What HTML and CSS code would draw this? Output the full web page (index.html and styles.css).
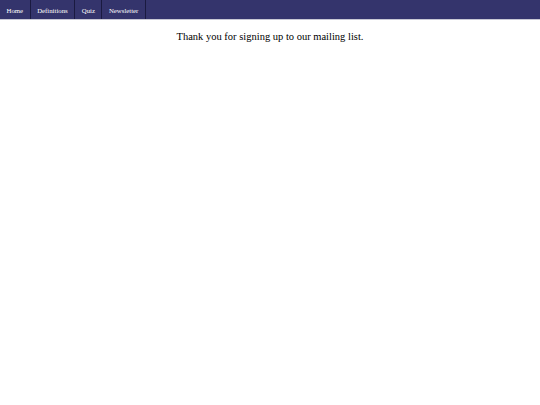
FILE: index.html
```html
<!DOCTYPE html>
<html>
<head>
<meta charset="utf-8">
<link rel="stylesheet" href="styles.css">
</head>
<body>
<nav class="nav">
  <a class="nav-item" href="#">Home</a>
  <a class="nav-item" href="#">Definitions</a>
  <a class="nav-item" href="#">Quiz</a>
  <a class="nav-item" href="#">Newsletter</a>
</nav>
<p class="message">Thank you for signing up to our mailing list.</p>
</body>
</html>
```
FILE: styles.css
```css
html, body {
  margin: 0;
  padding: 0;
  background: #ffffff;
}
body {
  font-family: "Liberation Serif", "Times New Roman", serif;
}
.nav {
  display: flex;
  height: 19px;
  background: #34346c;
  border-bottom: 1px solid #c8c8d4;
}
.nav-item {
  display: flex;
  align-items: center;
  padding: 1px 6.5px 0;
  color: #ffffff;
  text-decoration: none;
  font-size: 6.8px;
  border-right: 1px solid #1a1a40;
}
.message {
  margin: 11px 0 0;
  text-align: center;
  font-size: 10.5px;
  color: #000000;
}
```
